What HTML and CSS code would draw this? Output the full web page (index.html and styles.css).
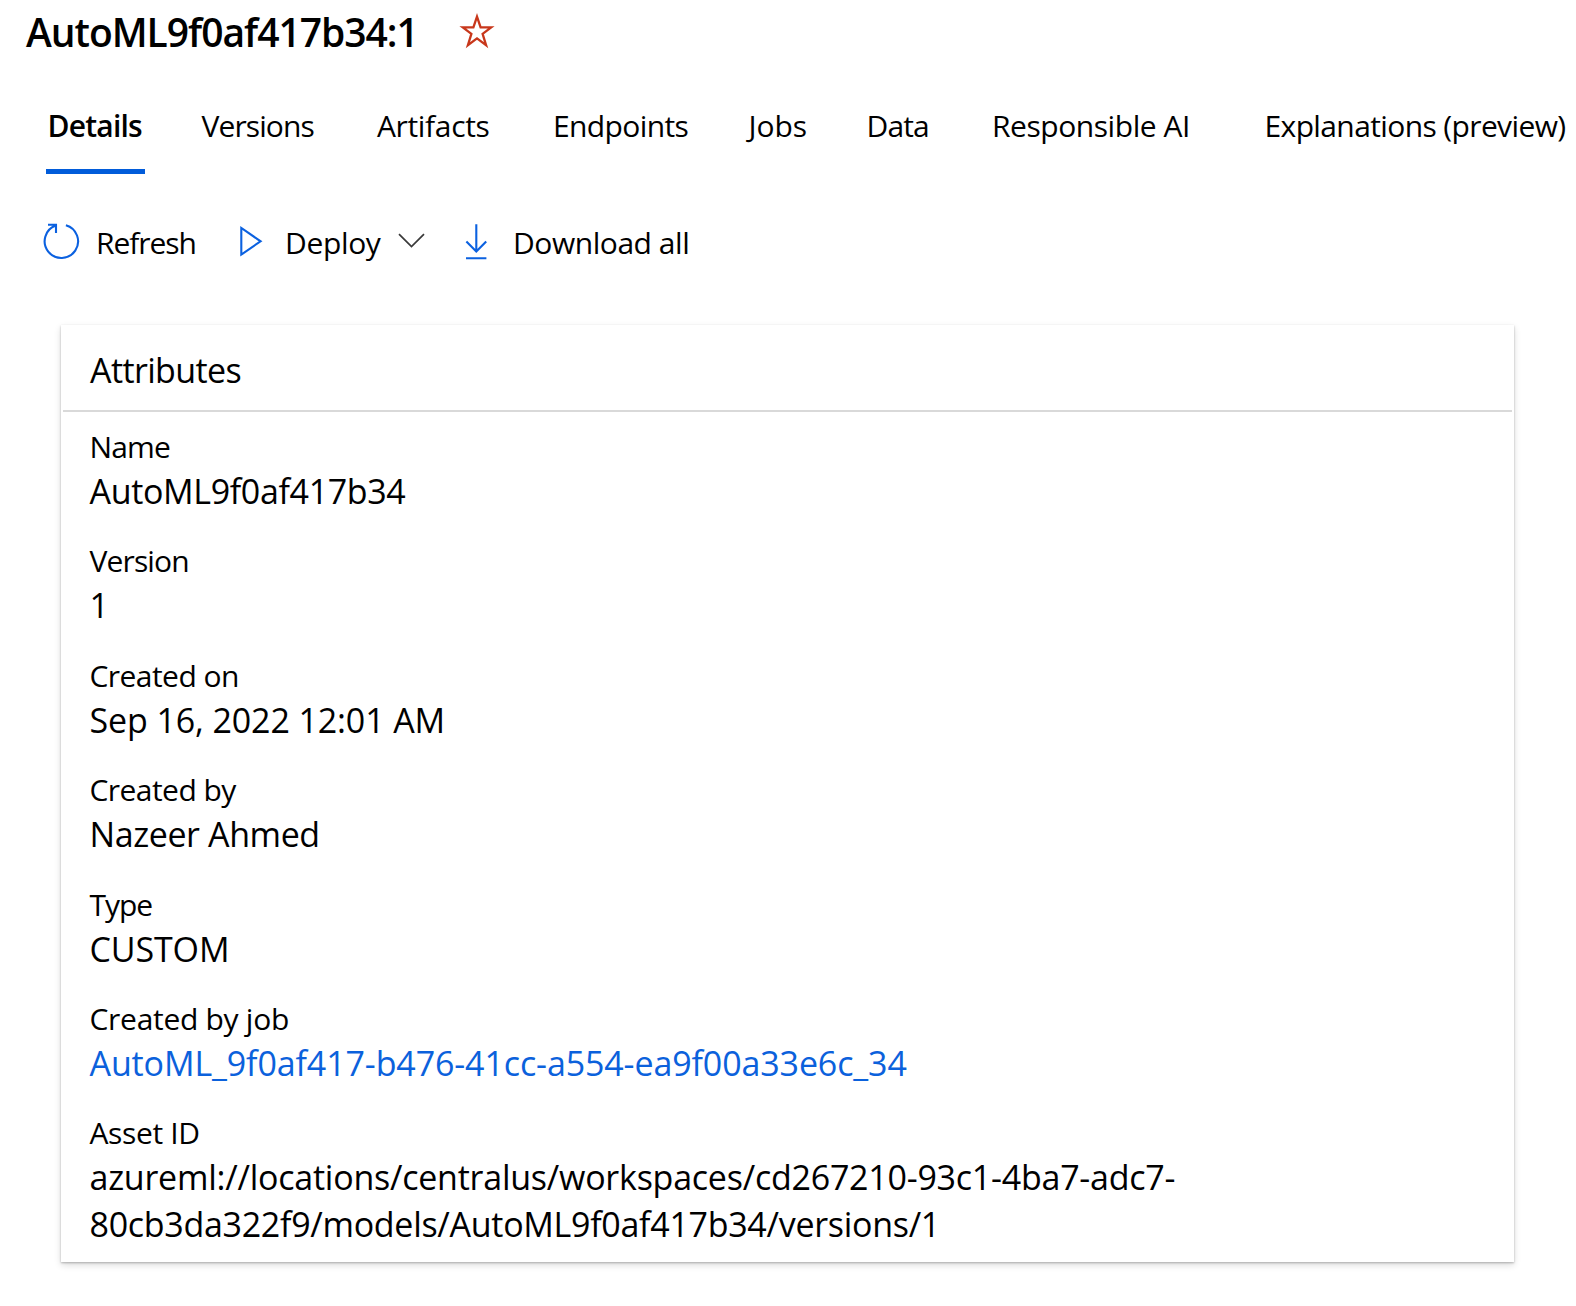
FILE: index.html
```
<!DOCTYPE html>
<html lang="en">
<head>
<meta charset="utf-8">
<title>AutoML9f0af417b34:1</title>
<link rel="stylesheet" href="styles.css">
</head>
<body>
<header class="page-header">
  <h1 class="page-title">AutoML9f0af417b34:1</h1>
  <svg class="star" width="36" height="36" viewBox="0 0 36 36"><path d="M18 3.6 21.6 14.3H32.2L23.6 20.9 27.1 32.2 18 25.4 8.9 32.2 12.4 20.9 3.8 14.3H14.4Z"/></svg>
</header>

<nav class="tabs">
  <a class="tab"><span class="tab-label active">Details</span></a>
  <a class="tab ls-90">Versions</a>
  <a class="tab ls-35">Artifacts</a>
  <a class="tab ls-62">Endpoints</a>
  <a class="tab ls-10">Jobs</a>
  <a class="tab ls-88">Data</a>
  <a class="tab ls-45">Responsible AI</a>
  <a class="tab ls-62">Explanations (preview)</a>
</nav>

<div class="toolbar">
  <div class="command refresh">
    <svg class="icon" width="42" height="42" viewBox="0 0 42 42"><path d="M15.6 5.6A16.7 16.7 0 1 0 25.9 5.2M8 4.8H16V13"/></svg>
    <span class="ls-100">Refresh</span>
  </div>
  <div class="command deploy">
    <svg class="icon" width="28" height="42" viewBox="0 0 28 42"><path d="M4.3 8V34.6L23.6 21.3Z"/></svg>
    <span class="ls-35">Deploy</span>
    <svg class="chevron" width="28" height="42" viewBox="0 0 28 42"><path d="M1 14.2 13.5 26.6 26 14.2"/></svg>
  </div>
  <div class="command download">
    <svg class="icon" width="24" height="42" viewBox="0 0 24 42"><path d="M12.3 4.2V31.4M2.4 21.6 12.3 31.6 22.2 21.6M2 38.2H22.4"/></svg>
    <span class="ls-45">Download all</span>
  </div>
</div>

<section class="card">
  <h2 class="card-title ls-62">Attributes</h2>
  <dl class="attributes">
    <div class="attribute"><dt class="ls-88">Name</dt><dd class="ls-35">AutoML9f0af417b34</dd></div>
    <div class="attribute"><dt class="ls-88">Version</dt><dd>1</dd></div>
    <div class="attribute"><dt class="ls-55">Created on</dt><dd class="ls-12">Sep 16, 2022 12:01 AM</dd></div>
    <div class="attribute"><dt class="ls-55">Created by</dt><dd class="ls-40">Nazeer Ahmed</dd></div>
    <div class="attribute"><dt class="ls-100">Type</dt><dd class="ls-12">CUSTOM</dd></div>
    <div class="attribute"><dt class="ls-30">Created by job</dt><dd class="ls-12"><a class="link">AutoML_9f0af417-b476-41cc-a554-ea9f00a33e6c_34</a></dd></div>
    <div class="attribute"><dt class="ls-35">Asset ID</dt><dd class="ls-24">azureml://locations/centralus/workspaces/cd267210-93c1-4ba7-adc7-<br><span class="ls-30">80cb3da322f9/models/AutoML9f0af417b34/versions/1</span></dd></div>
  </dl>
</section>
</body>
</html>
```
FILE: styles.css
```
* { box-sizing: border-box; }

body {
  min-height: 1306px;
  margin: 0;
  background: #fff;
  color: #000;
  font-family: "Segoe UI", "Open Sans", "Noto Sans", sans-serif;
  font-size: 30px;
}

.page-header {
  display: flex;
  height: 82px;
  padding: 2px 0 0 26px;
}

.page-title {
  width: 433px;
  margin: 0;
  font-size: 39px;
  font-weight: 600;
  line-height: 60px;
  letter-spacing: -1.02px;
  white-space: nowrap;
}

svg { display: block; flex: none; fill: none; }

.star { margin-top: 11px; stroke: #c8371b; stroke-width: 2.3; }

.tabs {
  display: grid;
  grid-template-columns: 155.5px 175.5px 176px 195.5px 118px 125.5px 272.5px auto;
  height: 92px;
  padding-left: 46px;
  line-height: 88px;
  white-space: nowrap;
}

.tab-label {
  display: block;
  width: 99px;
  height: 92px;
  padding-left: 1.5px;
  border-bottom: 5px solid #015cda;
  font-weight: 600;
  letter-spacing: -0.79px;
}

.toolbar {
  display: flex;
  align-items: center;
  height: 60px;
  margin-top: 38px;
  padding-left: 40px;
  line-height: 60px;
  white-space: nowrap;
}

.command { display: flex; align-items: center; }
.command span { padding-top: 2px; }
.command svg { margin-bottom: 2px; }
.refresh { width: 197px; }
.refresh .icon { margin-right: 14px; }
.deploy { width: 227px; }
.deploy .icon { margin-right: 20px; }
.deploy span { width: 112.5px; }
.download .icon { margin-right: 25px; }

.icon { stroke: #0b61e0; stroke-width: 2.1; }
.chevron { stroke: #3a3a3a; stroke-width: 1.7; }

.card {
  width: 1453px;
  height: 937px;
  margin: 53px 0 0 61px;
  background: #fff;
  box-shadow: 0 3px 7px rgba(0, 0, 0, 0.14), 0 0.6px 2px rgba(0, 0, 0, 0.25);
}

.card-title {
  height: 87px;
  margin: 0 2px;
  padding: 3px 0 0 27px;
  border-bottom: 2px solid #d9d9d9;
  font-size: 34px;
  font-weight: 400;
  line-height: 84px;
}

.attributes {
  display: flex;
  flex-direction: column;
  gap: 26.4px;
  margin: 0;
  padding: 15px 28.5px 0;
}

.attribute { display: flex; flex-direction: column; gap: 1px; }

dt { line-height: 40px; }
dd { margin: 0; font-size: 34px; line-height: 47px; white-space: nowrap; }

.link { color: #0b61dc; }

.ls-10 { letter-spacing: -0.1px; }
.ls-12 { letter-spacing: -0.12px; }
.ls-24 { letter-spacing: -0.24px; }
.ls-30 { letter-spacing: -0.29px; }
.ls-35 { letter-spacing: -0.35px; }
.ls-40 { letter-spacing: -0.4px; }
.ls-45 { letter-spacing: -0.45px; }
.ls-55 { letter-spacing: -0.55px; }
.ls-62 { letter-spacing: -0.62px; }
.ls-88 { letter-spacing: -0.86px; }
.ls-90 { letter-spacing: -0.9px; }
.ls-100 { letter-spacing: -1.06px; }
```
